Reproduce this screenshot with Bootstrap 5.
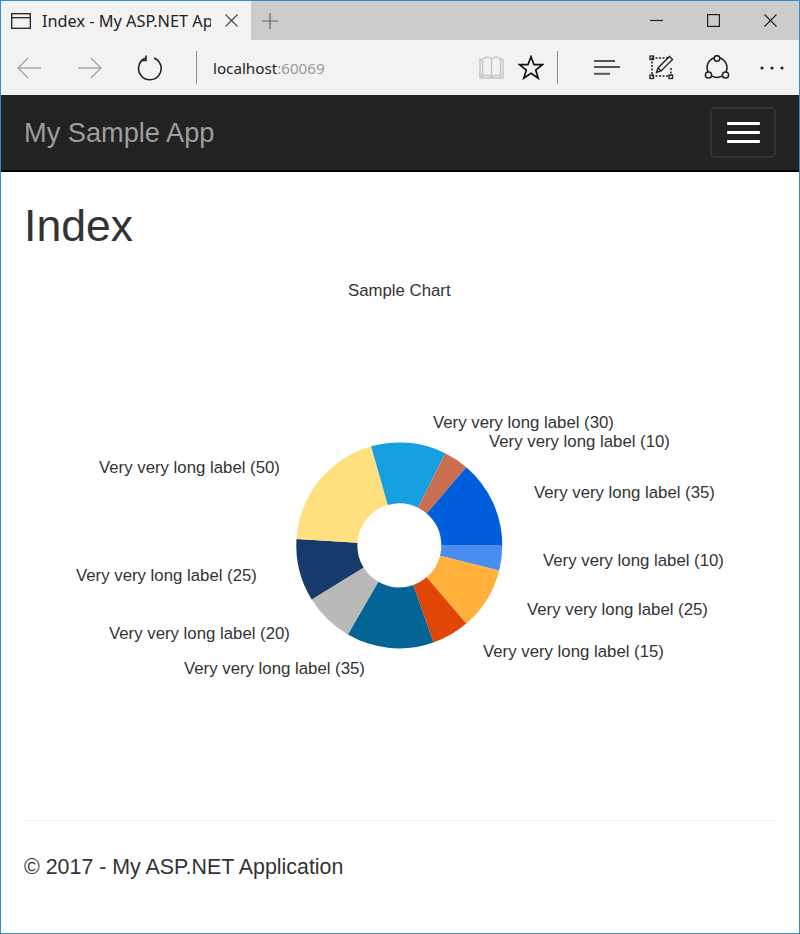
<!DOCTYPE html>
<html lang="en">
<head>
    <meta charset="UTF-8">
    <meta name="viewport" content="width=device-width, initial-scale=1.0">
    <title>Index - My ASP.NET Application</title>
    <link href="https://cdn.jsdelivr.net/npm/bootstrap@5.3.0/dist/css/bootstrap.min.css" rel="stylesheet">
    <style>
        body { font-family: "Liberation Sans", Arial, sans-serif; color: #333; background: #fff; }
        .app-window { height: 934px; border: 1px solid #2f8fcb; overflow: hidden; }
        /* browser chrome */
        .tab-strip { height: 39px; background: #cccccc; }
        .tab-active { width: 250px; background: #f2f2f2; padding-left: 10px; }
        .tab-title { width: 169px; margin-left: 11px; overflow: hidden; white-space: nowrap; font: 16.3px "Noto Sans", "Open Sans", sans-serif; color: #222; }
        .tab-close { margin-left: 14px; }
        .tab-new { margin-left: 11px; }
        .win-btn { width: 57px; }
        .tool-bar { height: 55px; background: #f2f2f2; }
        .tool-slot { width: 56px; margin-right: 5px; }
        .tool-reload { width: 54px; }
        .tool-right { width: 55px; }
        .tool-book { width: 39px; }
        .tool-sep { width: 1px; height: 33px; background: #8c8c8c; }
        .sep-left { margin-left: 19px; }
        .sep-right { margin: 0 21px 0 7px; }
        .url-text { margin-left: 16px; font: 15.2px "Noto Sans", "Open Sans", sans-serif; color: #222; }
        .url-port { color: #999; }
        /* site */
        .site-nav { height: 77px; background: #222; border-bottom: 2px solid #000; padding: 1px 23px 0; }
        .site-brand { font-size: 27.2px; color: #9d9d9d; padding: 0; margin: 0; }
        .menu-btn { width: 66px; height: 51px; border: 2px solid #333; border-radius: 5px; padding: 0; gap: 6px; margin-top: -1px; }
        .menu-bar { display: block; width: 33px; height: 3px; border-radius: 1px; background: #fff; }
        .page-body { padding: 0 23px; }
        .page-title { font-size: 44.6px; font-weight: 400; line-height: 1.1; margin: 29px 0 0; color: #333; }
        .chart-area { display: block; width: 752px; height: 530px; margin-top: 20px; }
        .chart-area text { font-family: "Liberation Sans", Arial, sans-serif; font-size: 16.8px; fill: #333; }
        .page-rule { margin: 20px 0 0; border-top: 1px solid #eee; opacity: 1; }
        .page-foot { margin: 34px 0 0; font-size: 21.4px; line-height: 25px; color: #333; }
    </style>
</head>
<body>
    <div class="app-window">
        <div class="tab-strip d-flex align-items-center">
            <div class="tab-active h-100 d-flex align-items-center">
                <svg width="20" height="16" viewBox="0 0 20 16" fill="none" stroke="#222" stroke-width="1.3"><rect x=".7" y=".7" width="18.6" height="14.6"/><path d="M1 4.7h18"/></svg>
                <div class="tab-title">Index - My ASP.NET App</div>
                <svg class="tab-close" width="13" height="13" viewBox="0 0 13 13" stroke="#444" stroke-width="1.1"><path d="M.5.5l12 12M12.500.5l-12 12"/></svg>
            </div>
            <svg class="tab-new" width="16" height="16" viewBox="0 0 16 16" stroke="#666" stroke-width="1.2"><path d="M8 0v16M0 8h16"/></svg>
            <div class="ms-auto d-flex">
                <div class="win-btn d-flex justify-content-center"><svg width="13" height="13" viewBox="0 0 13 13" stroke="#222" stroke-width="1.2"><path d="M0 6.500h13"/></svg></div>
                <div class="win-btn d-flex justify-content-center"><svg width="13" height="13" viewBox="0 0 13 13" fill="none" stroke="#222" stroke-width="1.2"><rect x=".6" y=".6" width="11.800" height="11.800"/></svg></div>
                <div class="win-btn d-flex justify-content-center"><svg width="13" height="13" viewBox="0 0 13 13" stroke="#222" stroke-width="1.1"><path d="M.5.5l12 12M12.500.5l-12 12"/></svg></div>
            </div>
        </div>
        <div class="tool-bar d-flex align-items-center">
            <div class="tool-slot d-flex justify-content-center"><svg width="24" height="24" viewBox="0 0 24 24" fill="none" stroke="#a9a9a9" stroke-width="1.500"><path d="M24 12H1M11 2L1 12l10 10"/></svg></div>
            <div class="tool-slot d-flex justify-content-center"><svg width="24" height="24" viewBox="0 0 24 24" fill="none" stroke="#a9a9a9" stroke-width="1.500"><path d="M0 12h23M13 2l10 10-10 10"/></svg></div>
            <div class="tool-reload d-flex justify-content-center"><svg width="26" height="26" viewBox="0 0 26 26" fill="none" stroke="#222" stroke-width="1.600"><path d="M8 3.300A11.300 11.300 0 1 0 17 3"/><path d="M9 .5V5.500H4"/></svg></div>
            <div class="tool-sep sep-left"></div>
            <div class="url-text">localhost<span class="url-port">:60069</span></div>
            <div class="ms-auto d-flex align-items-center">
                <div class="tool-book d-flex justify-content-center"><svg width="25" height="24" viewBox="0 0 25 24" fill="none" stroke="#c6c6c6" stroke-width="1.500"><path d="M1 3.500h2.500V20H1zM3.500 3C6 .8 10 .8 12.500 3v18C10 19 6 19 3.500 20zM12.500 3C15 .8 19 .8 21.500 3v17C19 19 15 19 12.500 21zM21.500 3.500H24V22H1v-2"/></svg></div>
                <div class="tool-book d-flex justify-content-center"><svg width="26" height="25" viewBox="0 0 26 25" fill="none" stroke="#111" stroke-width="1.700"><path d="M13 1.800l3 7.900h8.500l-6.800 5.300 2.500 8.200-7.200-5-7.200 5 2.500-8.200L1.500 9.700H10z"/></svg></div>
                <div class="tool-sep sep-right"></div>
                <div class="tool-right d-flex justify-content-center"><svg width="26" height="15" viewBox="0 0 26 15" stroke="#222" stroke-width="1.500"><path d="M0 1h21M0 7h26"/><path d="M0 13.800h16" stroke="#555" stroke-width="2"/></svg></div>
                <div class="tool-right d-flex justify-content-center"><svg width="25" height="25" viewBox="0 0 25 25" fill="none" stroke="#222"><path d="M3 3h17M3 3v18M3 21h18M22 13v8" stroke-width="1.500" stroke-dasharray="2 1.500"/><rect x="1" y="1" width="3.500" height="3.500" stroke-width="1.300"/><rect x="1" y="20" width="3.500" height="3.500" stroke-width="1.300"/><rect x="20" y="20" width="3.500" height="3.500" stroke-width="1.300"/><path d="M7.500 17.500l1.500-4.500L20.500 1.500l3 3L12 16zM9 13l3 3" stroke-width="1.400"/></svg></div>
                <div class="tool-right d-flex justify-content-center"><svg width="26" height="25" viewBox="0 0 26 25" fill="none" stroke="#222" stroke-width="1.500"><circle cx="13" cy="12.500" r="10"/><circle cx="13" cy="3.500" r="2.800" fill="#f2f2f2"/><circle cx="4.500" cy="20" r="3.100" fill="#f2f2f2"/><circle cx="21.500" cy="20" r="3.100" fill="#f2f2f2"/></svg></div>
                <div class="tool-right d-flex justify-content-center"><svg width="24" height="4" viewBox="0 0 24 4" fill="#222"><circle cx="2" cy="2" r="1.600"/><circle cx="12" cy="2" r="1.600"/><circle cx="22" cy="2" r="1.600"/></svg></div>
            </div>
        </div>

        <nav class="navbar site-nav d-flex align-items-center justify-content-between">
            <a class="navbar-brand site-brand" href="#">My Sample App</a>
            <button class="navbar-toggler menu-btn d-flex flex-column align-items-center justify-content-center" type="button" aria-label="Menu">
                <span class="menu-bar"></span>
                <span class="menu-bar"></span>
                <span class="menu-bar"></span>
            </button>
        </nav>

        <div class="page-body">
            <h1 class="page-title">Index</h1>
            <svg id="chart" class="chart-area" viewBox="24 270 752 530">
                <text x="348" y="296">Sample Chart</text>
                <text x="433" y="428">Very very long label (30)</text>
                <text x="489" y="447">Very very long label (10)</text>
                <text x="534" y="498">Very very long label (35)</text>
                <text x="543" y="566">Very very long label (10)</text>
                <text x="527" y="615">Very very long label (25)</text>
                <text x="483" y="657">Very very long label (15)</text>
                <text x="184" y="674">Very very long label (35)</text>
                <text x="109" y="639">Very very long label (20)</text>
                <text x="76" y="581">Very very long label (25)</text>
                <text x="99" y="473">Very very long label (50)</text>
            </svg>
            <hr class="page-rule">
            <footer class="page-foot">© 2017 - My ASP.NET Application</footer>
        </div>
    </div>

    <script src="https://cdn.jsdelivr.net/npm/bootstrap@5.3.0/dist/js/bootstrap.bundle.min.js"></script>
    <script>
        // clockwise from 3 o'clock
        const slices = [
            [10, '#4a8df0'], [25, '#ffb13c'], [15, '#e04606'], [35, '#046595'], [20, '#b9b9b9'],
            [25, '#163a6b'], [50, '#ffe07f'], [30, '#159fe0'], [10, '#ca6f50'], [35, '#005ddc']
        ];
        const cx = 399.3, cy = 545.4, outer = 103, inner = 42;
        const total = slices.reduce((sum, s) => sum + s[0], 0);
        const chart = document.getElementById('chart');
        let angle = 0;
        slices.forEach(([value, color]) => {
            const next = angle + value / total * 2 * Math.PI;
            const pt = (r, a) => `${cx + r * Math.cos(a)} ${cy + r * Math.sin(a)}`;
            const large = next - angle > Math.PI ? 1 : 0;
            const path = document.createElementNS('http://www.w3.org/2000/svg', 'path');
            path.setAttribute('d', `M${pt(outer, angle)}A${outer} ${outer} 0 ${large} 1 ${pt(outer, next)}L${pt(inner, next)}A${inner} ${inner} 0 ${large} 0 ${pt(inner, angle)}Z`);
            path.setAttribute('fill', color);
            chart.appendChild(path);
            angle = next;
        });
    </script>
</body>
</html>
